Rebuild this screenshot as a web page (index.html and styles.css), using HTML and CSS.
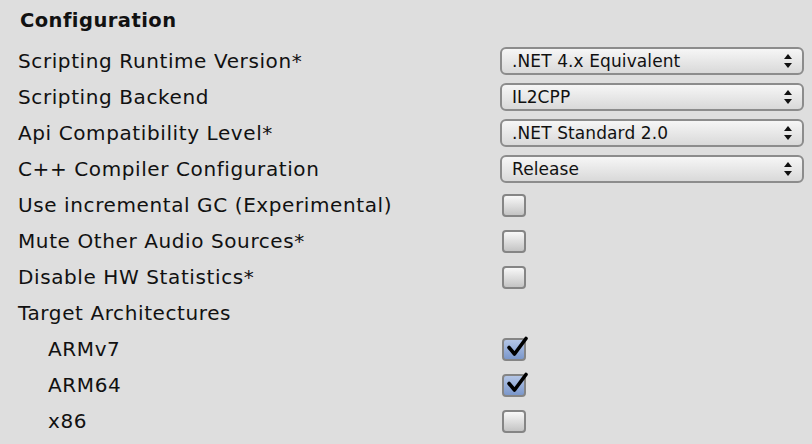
FILE: index.html
```html
<!DOCTYPE html>
<html>
<head>
<meta charset="utf-8">
<link rel="stylesheet" href="styles.css">
</head>
<body>
<div class="panel">
  <div class="heading">Configuration</div>
  <div class="row"><span class="label">Scripting Runtime Version*</span><div class="select"><span>.NET 4.x Equivalent</span><span class="arrows"></span></div></div>
  <div class="row"><span class="label">Scripting Backend</span><div class="select"><span>IL2CPP</span><span class="arrows"></span></div></div>
  <div class="row"><span class="label">Api Compatibility Level*</span><div class="select"><span>.NET Standard 2.0</span><span class="arrows"></span></div></div>
  <div class="row"><span class="label">C++ Compiler Configuration</span><div class="select"><span>Release</span><span class="arrows"></span></div></div>
  <div class="row"><span class="label">Use incremental GC (Experimental)</span><span class="check"></span></div>
  <div class="row"><span class="label">Mute Other Audio Sources*</span><span class="check"></span></div>
  <div class="row"><span class="label">Disable HW Statistics*</span><span class="check"></span></div>
  <div class="row"><span class="label">Target Architectures</span></div>
  <div class="row"><span class="label indent">ARMv7</span><span class="check on"><svg viewBox="0 0 24 24" width="24" height="24"><path d="M4 12.5 L9.5 19 L21 3.5" fill="none" stroke="#000" stroke-width="3.6" stroke-linecap="round" stroke-linejoin="round"/></svg></span></div>
  <div class="row"><span class="label indent">ARM64</span><span class="check on"><svg viewBox="0 0 24 24" width="24" height="24"><path d="M4 12.5 L9.5 19 L21 3.5" fill="none" stroke="#000" stroke-width="3.6" stroke-linecap="round" stroke-linejoin="round"/></svg></span></div>
  <div class="row"><span class="label indent">x86</span><span class="check"></span></div>
</div>
</body>
</html>
```
FILE: styles.css
```css
html, body {
  margin: 0;
  padding: 0;
  background: #dedede;
}
.panel {
  width: 812px;
  height: 444px;
  overflow: hidden;
  box-sizing: border-box;
  padding-left: 18px;
  font-family: "DejaVu Sans", "Open Sans", sans-serif;
  font-size: 20px;
  letter-spacing: 0.6px;
  color: #111;
}
.heading {
  height: 43px;
  line-height: 42px;
  font-weight: bold;
  padding-left: 2px;
  font-size: 19.5px;
  letter-spacing: 0.45px;
}
.row {
  height: 36px;
  display: flex;
  align-items: center;
}
.label {
  width: 482px;
  flex: none;
  white-space: nowrap;
}
.label.indent {
  padding-left: 30px;
  box-sizing: border-box;
}
.select {
  width: 304px;
  height: 28px;
  box-sizing: border-box;
  border: 2px solid #8c8c8c;
  border-radius: 6px;
  background: linear-gradient(#f6f6f6, #d9d9d9);
  display: flex;
  align-items: center;
  justify-content: space-between;
  padding: 0 10px 0 10px;
  font-size: 17px;
  letter-spacing: 0.1px;
}
.arrows {
  position: relative;
  width: 8px;
  height: 14px;
}
.arrows::before, .arrows::after {
  content: "";
  position: absolute;
  left: 0;
  border-left: 4px solid transparent;
  border-right: 4px solid transparent;
}
.arrows::before {
  top: 0;
  border-bottom: 5px solid #111;
}
.arrows::after {
  bottom: 0;
  border-top: 5px solid #111;
}
.check {
  width: 24px;
  height: 23px;
  margin-left: 2px;
  box-sizing: border-box;
  border: 2px solid #858585;
  border-radius: 4px;
  background: linear-gradient(#f8f8f8, #c4c4c4);
  position: relative;
}
.check.on {
  background: linear-gradient(#b4c6e6, #7b97cb);
}
.check svg {
  position: absolute;
  left: 1px;
  top: -5px;
}
```
